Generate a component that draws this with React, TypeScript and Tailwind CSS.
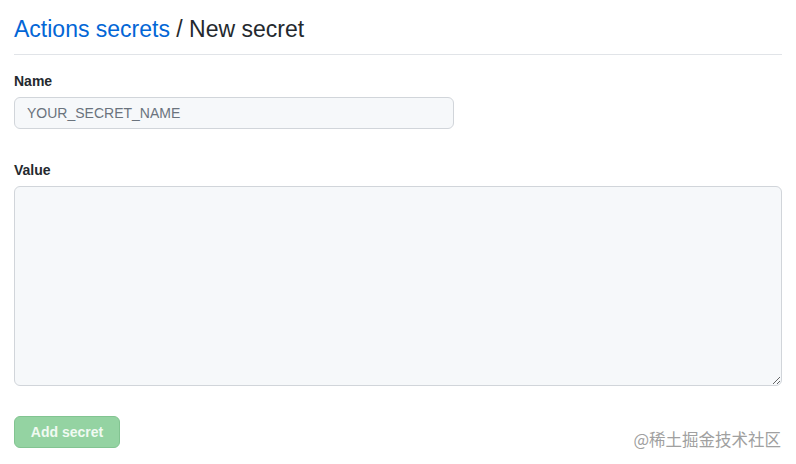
export default function App() {
  return (
    <div className="relative h-[464px] w-[796px] bg-white px-[14px] pt-[14px] font-['Liberation_Sans',Arial,sans-serif] text-[#24292e]">
      <div className="w-[768px]">
        <h2 className="border-b border-[#e1e4e8] pb-[10px] text-[23px] leading-[30px] font-normal">
          <a className="text-[#0366d6]">Actions secrets</a> / New secret
        </h2>

        <div className="mt-[16px]">
          <label className="block text-[14px] leading-[20px] font-bold">Name</label>
          <input
            placeholder="YOUR_SECRET_NAME"
            className="mt-[6px] block h-[32px] w-[440px] rounded-[6px] border border-[#d1d5da] bg-[#f6f8fa] px-[12px] text-[14px] text-[#24292e] placeholder:text-[#6a737d] outline-none"
          />
        </div>

        <div className="mt-[31px]">
          <label className="block text-[14px] leading-[20px] font-bold">Value</label>
          <textarea className="mt-[6px] block h-[200px] w-[768px] rounded-[6px] border border-[#d1d5da] bg-[#f6f8fa] px-[12px] py-[8px] text-[14px] outline-none" />
        </div>

        <button className="mt-[30px] flex h-[32px] w-[106px] items-center justify-center rounded-[6px] border border-[#82c491] bg-[#94d3a2] text-[14px] font-bold text-[#f0faf2]">
          Add secret
        </button>
      </div>

      <div className="absolute right-[15px] bottom-[14px] font-['Noto_Sans_CJK_SC',sans-serif] text-[16.5px] leading-[22px] text-[#a0a0a0]">
        @稀土掘金技术社区
      </div>
    </div>
  );
}
